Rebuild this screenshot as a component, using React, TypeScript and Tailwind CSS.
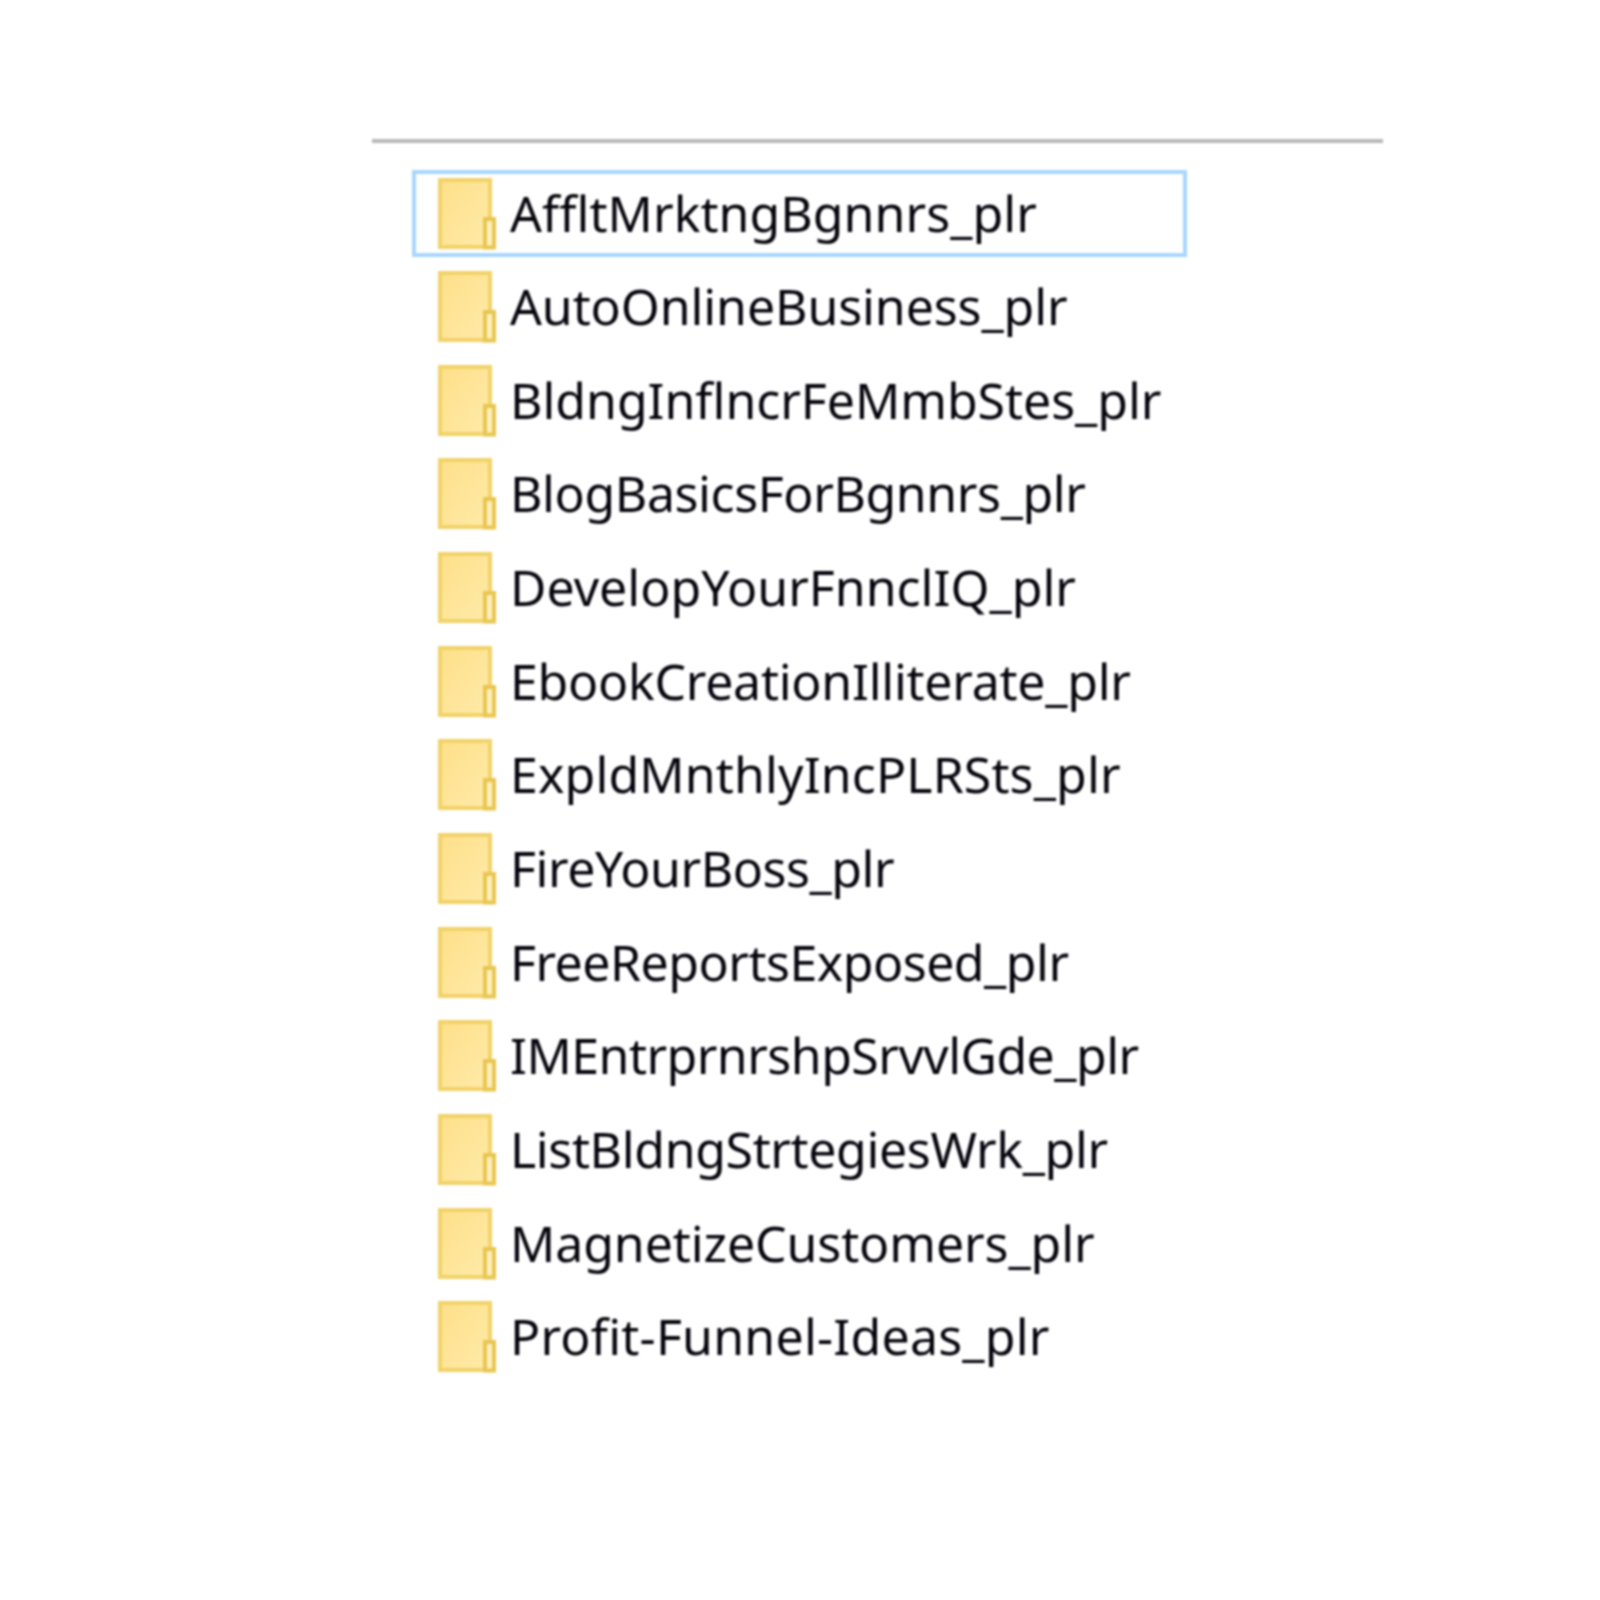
const folders = [
    { name: 'AffltMrktngBgnnrs_plr', tracking: 'tracking-[0.05px]' },
    { name: 'AutoOnlineBusiness_plr', tracking: 'tracking-[-0.1px]' },
    { name: 'BldngInflncrFeMmbStes_plr', tracking: 'tracking-[-0.04px]' },
    { name: 'BlogBasicsForBgnnrs_plr', tracking: 'tracking-[-0.4px]' },
    { name: 'DevelopYourFnnclIQ_plr', tracking: 'tracking-normal' },
    { name: 'EbookCreationIlliterate_plr', tracking: 'tracking-[-0.26px]' },
    { name: 'ExpldMnthlyIncPLRSts_plr', tracking: 'tracking-[0.13px]' },
    { name: 'FireYourBoss_plr', tracking: 'tracking-[-0.45px]' },
    { name: 'FreeReportsExposed_plr', tracking: 'tracking-[-0.5px]' },
    { name: 'IMEntrprnrshpSrvvlGde_plr', tracking: 'tracking-[-0.53px]' },
    { name: 'ListBldngStrtegiesWrk_plr', tracking: 'tracking-[-0.37px]' },
    { name: 'MagnetizeCustomers_plr', tracking: 'tracking-[-0.1px]' },
    { name: 'Profit-Funnel-Ideas_plr', tracking: 'tracking-[0.22px]' },
]

function FolderIcon({ id }: { id: number }) {
    return (
        <svg width="58" height="72" viewBox="0 0 58 72" className="shrink-0">
            <defs>
                <linearGradient id={`folder-${id}`} x1="0" y1="0" x2="1" y2="1">
                    <stop offset="0" stopColor="#fee08a" />
                    <stop offset="1" stopColor="#ffeaa8" />
                </linearGradient>
            </defs>
            <rect x="2" y="2" width="50" height="67" fill={`url(#folder-${id})`} stroke="#f2d268" strokeWidth="4" />
            <rect x="47" y="41" width="9" height="28.5" fill="#fff0bc" stroke="#e8c652" strokeWidth="4" />
        </svg>
    )
}

export default function App() {
    return (
        <div className="min-h-[1600px] bg-white pt-[138.5px] font-['Noto_Sans',sans-serif] blur-[0.8px]">
            <div className="ml-[372px] h-[4px] w-[1011px] bg-[#b8b8b8]" />
            <ul className="ml-[412px] mt-[27.5px] w-[775px]">
                {folders.map((folder, i) => (
                    <li
                        key={folder.name}
                        className={`flex h-[87px] items-center gap-[14px] border-[4px] pl-[22px] mb-[6.65px] ${i === 0 ? 'border-[#a8d6fc]' : 'border-transparent'}`}
                    >
                        <FolderIcon id={i} />
                        <span className={`whitespace-nowrap pb-[2px] text-[50px] leading-none text-[#05050d] ${folder.tracking}`}>
                            {folder.name}
                        </span>
                    </li>
                ))}
            </ul>
        </div>
    )
}
